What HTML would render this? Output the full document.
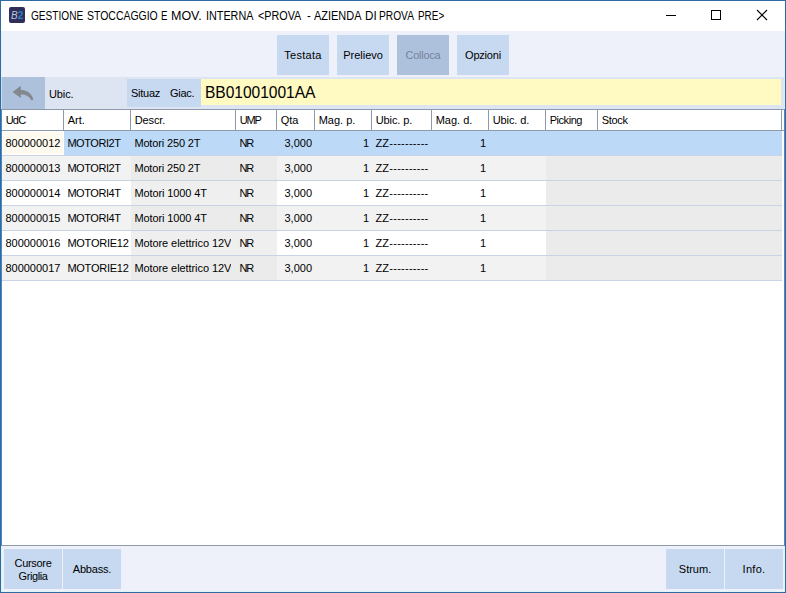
<!DOCTYPE html>
<html lang="it"><head><meta charset="utf-8"><title>GESTIONE STOCCAGGIO E MOV. INTERNA</title>
<style>
*{box-sizing:border-box;margin:0;padding:0}
html,body{width:786px;height:593px;overflow:hidden;background:#fff}
body{font-family:"Liberation Sans",sans-serif;font-size:11px;color:#000;position:relative}
#win{position:absolute;left:0;top:0;width:786px;height:593px;background:#eef1fa;overflow:hidden}
.bd{position:absolute;background:#2f6ba3}
#title{position:absolute;left:1px;top:1px;width:784px;height:30px;background:#fff}
#ttext{position:absolute;left:0;top:8px;font-size:12px;line-height:15px;white-space:nowrap}#ttext span{position:absolute;top:0;transform-origin:0 0;white-space:pre}
.btn{position:absolute;background:#c6d9f1;text-align:center;white-space:nowrap}
.tb{top:35px;width:52px;height:40px;line-height:40px}
.bb{top:549px;width:58px;height:40px;line-height:40px}
#row2{position:absolute;left:1px;top:77px;width:784px;height:32px;background:#dde5f2}
#grid{position:absolute;left:1px;top:109px;width:784px;height:437px;background:#fff;border:1px solid #8e99ac;border-left-color:#4d86c0;border-right-color:#4d86c0}
.hd{position:absolute;top:110px;height:20px;line-height:20px;padding-left:3.7px;white-space:nowrap}
.vl{position:absolute;top:110px;width:1px;height:20px;background:#8e99ac}
.hl{position:absolute;left:2px;width:780px;height:1px;background:#c8d4e6}
.c{position:absolute;height:24px;line-height:24px;white-space:nowrap;overflow:hidden}
.r{text-align:right;padding-right:3px}
.l{padding-left:3.4px}
.t{position:absolute;line-height:13px;white-space:nowrap}
</style></head><body>
<div id="win">
<div id="title">
<svg style="position:absolute;left:8px;top:6px" width="16" height="16" viewBox="0 0 16 16"><rect x="0" y="0" width="16" height="16" rx="2" fill="#2d2f58"/><text x="2" y="11.8" font-family="Liberation Sans,sans-serif" font-size="10" font-style="italic" fill="#bcc3df">B</text><text x="8.8" y="11.8" font-family="Liberation Sans,sans-serif" font-size="10" font-weight="bold" fill="#2b83c6">2</text></svg>
<div id="ttext"><span style="left:30.0px;transform:scaleX(0.842)">GESTIONE</span> <span style="left:85.6px;transform:scaleX(0.872)">STOCCAGGIO</span> <span style="left:160.4px;transform:scaleX(0.800)">E</span> <span style="left:169.6px;transform:scaleX(1.040)">MOV.</span> <span style="left:204.5px;transform:scaleX(0.900)">INTERNA</span> <span style="left:257.4px;transform:scaleX(0.900)">&lt;PROVA</span> <span style="left:305.8px;transform:scaleX(0.950)">-</span> <span style="left:312.8px;transform:scaleX(0.912)">AZIENDA</span> <span style="left:363.5px;transform:scaleX(0.970)">DI</span> <span style="left:377.6px;transform:scaleX(0.850)">PROVA</span> <span style="left:416.9px;transform:scaleX(0.826)">PRE&gt;</span></div>
<svg style="position:absolute;left:660px;top:5px" width="120" height="20" viewBox="0 0 120 20" shape-rendering="crispEdges"><rect x="5" y="9" width="10" height="1" fill="#000"/><rect x="50.5" y="4.5" width="9" height="9" fill="none" stroke="#000" stroke-width="1"/><g shape-rendering="auto" stroke="#000" stroke-width="1.1"><line x1="96" y1="4" x2="106" y2="14"/><line x1="106" y1="4" x2="96" y2="14"/></g></svg>
</div>
<div class="btn tb" style="left:277px;"><span style="letter-spacing:0.3px">Testata</span></div><div class="btn tb" style="left:337px;"><span>Prelievo</span></div><div class="btn tb" style="left:397px;background:#adc1dd;color:#76849c"><span style="letter-spacing:-0.25px">Colloca</span></div><div class="btn tb" style="left:457px;"><span style="letter-spacing:-0.2px">Opzioni</span></div>
<div id="row2"></div>
<div class="btn" style="left:1px;top:77px;width:44px;height:32px;background:#adc1dd"></div>
<svg style="position:absolute;left:0;top:77px" width="45" height="32" viewBox="0 77 45 32"><path d="M12.6 91.9 L20.8 85.8 L20.8 89.9 C26.5 89.9 31 92.5 33 98.3 A1.2 1.2 0 0 1 30.9 99.6 C28.8 96 26 94.5 20.8 94.5 L20.8 98 Z" fill="#83888f"/></svg>
<div class="t" style="left:49px;top:88px"><span style="letter-spacing:-0.1px">Ubic.</span></div>
<div class="btn" style="left:127px;top:79px;width:74px;height:28px"></div>
<div class="t" style="left:131px;top:87px"><span style="letter-spacing:-0.25px">Situaz</span></div>
<div class="t" style="left:170px;top:87px"><span style="letter-spacing:-0.3px">Giac.</span></div>
<div style="position:absolute;left:201px;top:79px;width:580px;height:26px;background:#fff9c2"></div>
<div class="t" id="bb" style="left:205px;top:84px;font-size:15.6px;line-height:18px;letter-spacing:-0.05px">BB01001001AA</div>
<div id="grid"></div>
<div style="position:absolute;left:2px;top:130px;width:782px;height:1px;background:#8e99ac"></div>
<div class="hd" style="left:2px"><span style="letter-spacing:-0.8px">UdC</span></div><div class="vl" style="left:63px"></div><div class="hd" style="left:64px"><span>Art.</span></div><div class="vl" style="left:130px"></div><div class="hd" style="left:131px"><span style="letter-spacing:-0.1px">Descr.</span></div><div class="vl" style="left:235px"></div><div class="hd" style="left:236px"><span style="letter-spacing:-1.2px">UMP</span></div><div class="vl" style="left:276px"></div><div class="hd" style="left:277px"><span>Qta</span></div><div class="vl" style="left:314px"></div><div class="hd" style="left:315px"><span>Mag. p.</span></div><div class="vl" style="left:371px"></div><div class="hd" style="left:372px"><span style="letter-spacing:-0.1px">Ubic. p.</span></div><div class="vl" style="left:431px"></div><div class="hd" style="left:432px"><span>Mag. d.</span></div><div class="vl" style="left:488px"></div><div class="hd" style="left:489px"><span style="letter-spacing:-0.1px">Ubic. d.</span></div><div class="vl" style="left:545px"></div><div class="hd" style="left:546px"><span style="letter-spacing:-0.45px">Picking</span></div><div class="vl" style="left:597px"></div><div class="hd" style="left:598px"><span style="letter-spacing:-0.3px">Stock</span></div><div class="vl" style="left:781px"></div><div class="c l" style="left:2px;top:131px;width:62px;background:#fffaf0;box-shadow:inset 0 0 0 1px #fff"><span>800000012</span></div><div class="c l" style="left:64px;top:131px;width:67px;background:#bcdaf8"><span style="letter-spacing:-0.45px">MOTORI2T</span></div><div class="c l" style="left:131px;top:131px;width:105px;background:#bcdaf8"><div style="width:97px;overflow:hidden"><span style="letter-spacing:-0.15px">Motori 250 2T</span></div></div><div class="c l" style="left:236px;top:131px;width:41px;background:#bcdaf8"><span style="letter-spacing:-1px">NR</span></div><div class="c r" style="left:277px;top:131px;width:38px;background:#bcdaf8"><span>3,000</span></div><div class="c r" style="left:315px;top:131px;width:57px;background:#bcdaf8"><span>1</span></div><div class="c l" style="left:372px;top:131px;width:60px;background:#bcdaf8"><span style="letter-spacing:0.25px">ZZ----------</span></div><div class="c r" style="left:432px;top:131px;width:57px;background:#bcdaf8"><span>1</span></div><div class="c l" style="left:489px;top:131px;width:57px;background:#bcdaf8"></div><div class="c l" style="left:546px;top:131px;width:52px;background:#bcdaf8"></div><div class="c l" style="left:598px;top:131px;width:184px;background:#bcdaf8"></div><div class="hl" style="top:155px"></div><div class="c l" style="left:2px;top:156px;width:62px;background:#f2f2f2"><span>800000013</span></div><div class="c l" style="left:64px;top:156px;width:67px;background:#f2f2f2"><span style="letter-spacing:-0.45px">MOTORI2T</span></div><div class="c l" style="left:131px;top:156px;width:105px;background:#ebebeb"><div style="width:97px;overflow:hidden"><span style="letter-spacing:-0.15px">Motori 250 2T</span></div></div><div class="c l" style="left:236px;top:156px;width:41px;background:#ebebeb"><span style="letter-spacing:-1px">NR</span></div><div class="c r" style="left:277px;top:156px;width:38px;background:#f2f2f2"><span>3,000</span></div><div class="c r" style="left:315px;top:156px;width:57px;background:#f2f2f2"><span>1</span></div><div class="c l" style="left:372px;top:156px;width:60px;background:#f2f2f2"><span style="letter-spacing:0.25px">ZZ----------</span></div><div class="c r" style="left:432px;top:156px;width:57px;background:#f2f2f2"><span>1</span></div><div class="c l" style="left:489px;top:156px;width:57px;background:#f2f2f2"></div><div class="c l" style="left:546px;top:156px;width:52px;background:#ebebeb"></div><div class="c l" style="left:598px;top:156px;width:184px;background:#ebebeb"></div><div class="hl" style="top:180px"></div><div class="c l" style="left:2px;top:181px;width:62px;background:#fff"><span>800000014</span></div><div class="c l" style="left:64px;top:181px;width:67px;background:#fff"><span style="letter-spacing:-0.45px">MOTORI4T</span></div><div class="c l" style="left:131px;top:181px;width:105px;background:#efefef"><div style="width:97px;overflow:hidden"><span style="letter-spacing:-0.1px">Motori 1000 4T</span></div></div><div class="c l" style="left:236px;top:181px;width:41px;background:#efefef"><span style="letter-spacing:-1px">NR</span></div><div class="c r" style="left:277px;top:181px;width:38px;background:#fff"><span>3,000</span></div><div class="c r" style="left:315px;top:181px;width:57px;background:#fff"><span>1</span></div><div class="c l" style="left:372px;top:181px;width:60px;background:#fff"><span style="letter-spacing:0.25px">ZZ----------</span></div><div class="c r" style="left:432px;top:181px;width:57px;background:#fff"><span>1</span></div><div class="c l" style="left:489px;top:181px;width:57px;background:#fff"></div><div class="c l" style="left:546px;top:181px;width:52px;background:#ebebeb"></div><div class="c l" style="left:598px;top:181px;width:184px;background:#ebebeb"></div><div class="hl" style="top:205px"></div><div class="c l" style="left:2px;top:206px;width:62px;background:#f2f2f2"><span>800000015</span></div><div class="c l" style="left:64px;top:206px;width:67px;background:#f2f2f2"><span style="letter-spacing:-0.45px">MOTORI4T</span></div><div class="c l" style="left:131px;top:206px;width:105px;background:#ebebeb"><div style="width:97px;overflow:hidden"><span style="letter-spacing:-0.1px">Motori 1000 4T</span></div></div><div class="c l" style="left:236px;top:206px;width:41px;background:#ebebeb"><span style="letter-spacing:-1px">NR</span></div><div class="c r" style="left:277px;top:206px;width:38px;background:#f2f2f2"><span>3,000</span></div><div class="c r" style="left:315px;top:206px;width:57px;background:#f2f2f2"><span>1</span></div><div class="c l" style="left:372px;top:206px;width:60px;background:#f2f2f2"><span style="letter-spacing:0.25px">ZZ----------</span></div><div class="c r" style="left:432px;top:206px;width:57px;background:#f2f2f2"><span>1</span></div><div class="c l" style="left:489px;top:206px;width:57px;background:#f2f2f2"></div><div class="c l" style="left:546px;top:206px;width:52px;background:#ebebeb"></div><div class="c l" style="left:598px;top:206px;width:184px;background:#ebebeb"></div><div class="hl" style="top:230px"></div><div class="c l" style="left:2px;top:231px;width:62px;background:#fff"><span>800000016</span></div><div class="c l" style="left:64px;top:231px;width:67px;background:#fff"><span style="letter-spacing:-0.25px">MOTORIE12</span></div><div class="c l" style="left:131px;top:231px;width:105px;background:#efefef"><div style="width:97px;overflow:hidden"><span style="letter-spacing:-0.08px">Motore elettrico 12V</span></div></div><div class="c l" style="left:236px;top:231px;width:41px;background:#efefef"><span style="letter-spacing:-1px">NR</span></div><div class="c r" style="left:277px;top:231px;width:38px;background:#fff"><span>3,000</span></div><div class="c r" style="left:315px;top:231px;width:57px;background:#fff"><span>1</span></div><div class="c l" style="left:372px;top:231px;width:60px;background:#fff"><span style="letter-spacing:0.25px">ZZ----------</span></div><div class="c r" style="left:432px;top:231px;width:57px;background:#fff"><span>1</span></div><div class="c l" style="left:489px;top:231px;width:57px;background:#fff"></div><div class="c l" style="left:546px;top:231px;width:52px;background:#ebebeb"></div><div class="c l" style="left:598px;top:231px;width:184px;background:#ebebeb"></div><div class="hl" style="top:255px"></div><div class="c l" style="left:2px;top:256px;width:62px;background:#f2f2f2"><span>800000017</span></div><div class="c l" style="left:64px;top:256px;width:67px;background:#f2f2f2"><span style="letter-spacing:-0.25px">MOTORIE12</span></div><div class="c l" style="left:131px;top:256px;width:105px;background:#ebebeb"><div style="width:97px;overflow:hidden"><span style="letter-spacing:-0.08px">Motore elettrico 12V</span></div></div><div class="c l" style="left:236px;top:256px;width:41px;background:#ebebeb"><span style="letter-spacing:-1px">NR</span></div><div class="c r" style="left:277px;top:256px;width:38px;background:#f2f2f2"><span>3,000</span></div><div class="c r" style="left:315px;top:256px;width:57px;background:#f2f2f2"><span>1</span></div><div class="c l" style="left:372px;top:256px;width:60px;background:#f2f2f2"><span style="letter-spacing:0.25px">ZZ----------</span></div><div class="c r" style="left:432px;top:256px;width:57px;background:#f2f2f2"><span>1</span></div><div class="c l" style="left:489px;top:256px;width:57px;background:#f2f2f2"></div><div class="c l" style="left:546px;top:256px;width:52px;background:#ebebeb"></div><div class="c l" style="left:598px;top:256px;width:184px;background:#ebebeb"></div><div class="hl" style="top:280px"></div>
<div class="btn bb" style="left:4px;line-height:13px;padding-top:8px"><span style="letter-spacing:-0.3px">Cursore</span><br><span style="letter-spacing:-0.4px">Griglia</span></div>
<div class="btn bb" style="left:63px"><span style="letter-spacing:-0.2px">Abbass.</span></div>
<div class="btn bb" style="left:666px"><span>Strum.</span></div>
<div class="btn bb" style="left:725px"><span style="letter-spacing:0.3px">Info.</span></div>
<div style="position:absolute;left:1px;top:546px;width:1px;height:46px;background:#def4fb"></div>
<div style="position:absolute;left:784px;top:546px;width:1px;height:46px;background:#def4fb"></div>
<div style="position:absolute;left:1px;top:31px;width:1px;height:78px;background:#def4fb;opacity:.6"></div>
<div style="position:absolute;left:784px;top:31px;width:1px;height:78px;background:#def4fb;opacity:.6"></div>
<div style="position:absolute;left:1px;top:591px;width:784px;height:1px;background:#def4fb"></div>
<div class="bd" style="left:0;top:0;width:786px;height:1px"></div>
<div class="bd" style="left:0;top:0;width:1px;height:593px"></div>
<div class="bd" style="left:785px;top:0;width:1px;height:593px"></div>
<div class="bd" style="left:0;top:592px;width:786px;height:1px"></div>
</div>
</body></html>
